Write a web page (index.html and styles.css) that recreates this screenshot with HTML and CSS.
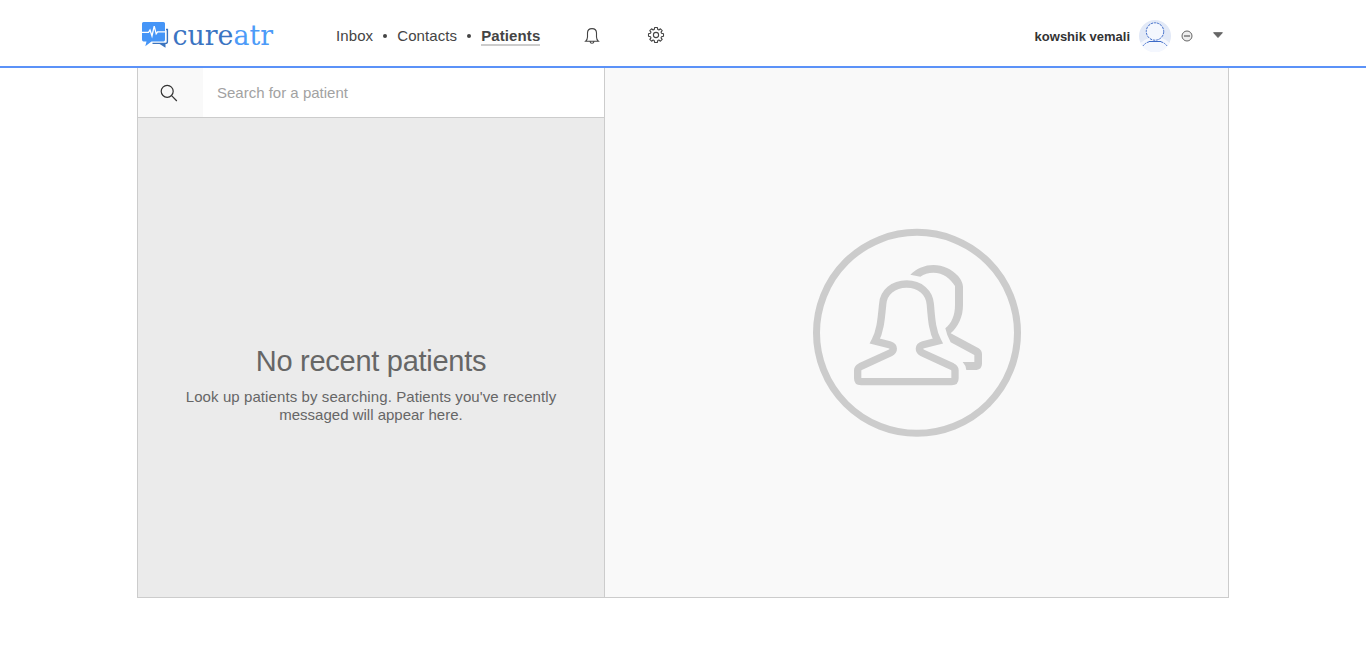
FILE: index.html
```html
<!DOCTYPE html>
<html lang="en">
<head>
<meta charset="utf-8">
<title>Cureatr - Patients</title>
<link rel="stylesheet" href="styles.css">
</head>
<body>
<header class="topbar">
  <div class="topbar-inner">
    <svg class="logo" width="136" height="38" viewBox="140 16 136 38" role="img" aria-label="cureatr">
      <path d="M166 29.500H167.400V41.500Q167.400 43.400 165.500 43.400H152.500" fill="none" stroke="#3b74bf" stroke-width="1.400"/>
      <path d="M158 43H165.500V47.800Z" fill="#3b74bf"/>
      <path d="M143.500 22H163.500Q165 22 165 23.500V39.500Q165 41.500 163.500 41.500H151.500L145.300 46.300L146.500 41.500H143.500Q142 41.500 142 39.500V23.500Q142 22 143.500 22Z" fill="#4595f7"/>
      <path d="M142 32.300H148.500L150 30L152 36L154.200 26.200L156.200 33.800L157.600 31.800H165.300" fill="none" stroke="#fff" stroke-width="1.300"/>
      <text class="logo-text" x="172.500" y="44.500" textLength="100.500" lengthAdjust="spacingAndGlyphs"><tspan fill="#3b74c2">cure</tspan><tspan fill="#4c9bf8">atr</tspan></text>
    </svg>
    <nav class="nav">
      <a class="nav-link">Inbox</a><span class="dot"></span>
      <a class="nav-link nav-contacts">Contacts</a><span class="dot"></span>
      <a class="nav-link nav-active">Patients</a>
    </nav>
    <svg class="bell" width="16" height="18" viewBox="584 27 16 18" fill="none" stroke="#444" stroke-width="1.100">
      <path d="M585.500 41.300H598.500Q596.500 39.500 596.500 37V33Q596.500 28.600 592 28.600T587.500 33V37Q587.500 39.500 585.500 41.300ZM590 41.500Q590.300 43.300 592 43.300T594 41.500"/>
    </svg>
    <svg class="gear" width="18" height="18" viewBox="-9 -9 18 18" fill="none" stroke="#444" stroke-width="1.100" stroke-linejoin="round">
      <path d="M-1.300-7.500H1.300L1.800-5.500L2.900-5L4.400-6.200L6.200-4.400L5-2.900L5.500-1.800L7.500-1.300V1.300L5.500 1.800L5 2.900L6.200 4.400L4.400 6.200L2.900 5L1.800 5.500L1.300 7.500H-1.300L-1.800 5.500L-2.900 5L-4.400 6.200L-6.200 4.400L-5 2.900L-5.500 1.800L-7.500 1.300V-1.300L-5.500-1.800L-5-2.900L-6.200-4.400L-4.400-6.200L-2.900-5L-1.800-5.500Z"/>
      <circle r="2.600"/>
    </svg>
    <div class="account">
      <span class="user-name">kowshik vemali</span>
      <svg class="avatar" width="32" height="32" viewBox="0 0 32 32">
        <circle cx="16" cy="16" r="16" fill="#e2e9f7"/>
        <path d="M1.500 23Q6 19 10 18L22 18Q27 19 30.500 23A16 16 0 0 1 1.500 23Z" fill="#f4f7fe"/>
        <circle cx="16" cy="11.500" r="8.700" fill="#f4f7fe" stroke="#4470cb" stroke-dasharray="2.500 .8"/>
        <path d="M10 21.500H22" stroke="#3d6bc8"/>
        <path d="M10 21.800Q6 23 4 26M22 21.800Q26 23 28 26" fill="none" stroke="#4470cb" stroke-dasharray="2 .7"/>
      </svg>
      <svg class="status" width="12" height="12" viewBox="0 0 12 12" fill="#eee" stroke="#666" stroke-width="1">
        <circle cx="6" cy="6" r="5"/><path d="M3 6H9" stroke-width="1.300"/>
      </svg>
      <svg class="caret" width="12" height="7" viewBox="0 0 12 7"><path d="M1.600.700H10.400L6 5.500Z" fill="#666" stroke="#666" stroke-linejoin="round"/></svg>
    </div>
  </div>
</header>
<main class="panels">
  <section class="list">
    <div class="search">
      <div class="search-icon">
        <svg width="18" height="18" viewBox="160 84 18 18" fill="none" stroke="#333" stroke-width="1.200"><circle cx="167.200" cy="91.300" r="6"/><path d="M171.600 95.700L176.800 101"/></svg>
      </div>
      <span class="placeholder">Search for a patient</span>
    </div>
    <div class="empty">
      <h1 class="empty-title">No recent patients</h1>
      <p class="empty-text"><span class="line-a">Look up patients by searching. Patients you've recently</span><br><span class="line-b">messaged will appear here.</span></p>
    </div>
  </section>
  <section class="detail">
    <svg width="210" height="210" viewBox="36 39 630 630">
      <g fill="none" stroke="#ccc" stroke-width="22">
        <circle cx="351" cy="353.500" r="301.500" stroke-width="21"/>
        <path stroke-miterlimit="10" d="M225 378C240 350 243 320 248 268C250 232 280 207 320 207C360 207 388 232 391 268C395 320 398 350 413 378L370 389C354 394 355 407 368 414L457 455Q465 459 465 466V490Q465 500 455 500H183Q173 500 173 490V466Q173 459 181 455L270 414C283 407 284 394 268 389Z"/>
      </g>
      <path fill="#ccc" d="M331 179C350 160 375 150 400 150C430 150 455 162 475 184Q488 200 489 215V270C489 305 475 335 452 355L536 400Q546 406 546 418V447Q545 463 530 465H499Q497 450 488 441H523V420L452 382Q440 360 436 340C455 325 465 300 465 270V213C450 190 430 173 400 173C385 173 372 177 361 185Z"/>
    </svg>
  </section>
</main>
</body>
</html>
```
FILE: styles.css
```css
* { box-sizing: border-box; }

body {
  margin: 0;
  background: #fff;
  color: #444;
  font-family: "Liberation Sans", Arial, sans-serif;
  font-size: 15px;
}

.topbar {
  height: 68px;
  border-bottom: 2px solid #5b92f8;
}

.topbar-inner {
  display: flex;
  align-items: center;
  width: 1092px;
  height: 70px;
  margin: 0 auto;
  padding-left: 3px;
}

.logo { overflow: visible; }
.logo-text { font-family: "DejaVu Serif", serif; font-size: 27px; }

.nav {
  display: flex;
  align-items: center;
  margin-left: 60px;
}

.nav-link {
  padding-top: 3px;
  border-bottom: 2px solid transparent;
  line-height: 17px;
  letter-spacing: 0.1px;
}

.nav-active { font-weight: bold; border-color: #ccc; }

.dot {
  width: 4px;
  height: 4px;
  margin: 2px 10px 0;
  border-radius: 50%;
  background: #444;
}

.bell { margin: 2px 0 0 44px; }
.gear { margin-left: 47px; }

.account {
  display: flex;
  align-items: center;
  margin-left: auto;
  padding-right: 5px;
}

.user-name { color: #333; font-size: 13px; font-weight: bold; padding-top: 2px; }
.avatar { margin: 1px 0 0 9px; }
.status { margin: 1px 0 0 10px; }
.caret { margin: 1px 0 0 19px; }

.panels {
  display: grid;
  grid-template-columns: 467px 1fr;
  width: 1092px;
  height: 530px;
  margin: 0 auto;
  border: 1px solid #ccc;
  border-top: 0;
}

.list {
  display: flex;
  flex-direction: column;
  border-right: 1px solid #ccc;
  background: #ebebeb;
}

.search {
  display: flex;
  align-items: center;
  height: 50px;
  border-bottom: 1px solid #ccc;
  background: #fff;
}

.search-icon {
  display: flex;
  align-items: center;
  width: 65px;
  height: 100%;
  padding-left: 22px;
  background: #f9f9f9;
}

.placeholder { margin-left: 14px; color: #a2a2a2; }

.empty {
  padding-top: 226px;
  color: #666;
  text-align: center;
}

.empty-title {
  margin: 0 0 10px;
  font-size: 29px;
  font-weight: normal;
  line-height: 34px;
  letter-spacing: -0.28px;
}

.empty-text { margin: 0; line-height: 18px; }
.line-a { letter-spacing: 0.09px; }

.detail {
  display: flex;
  align-items: center;
  justify-content: center;
  background: #f9f9f9;
}
```
